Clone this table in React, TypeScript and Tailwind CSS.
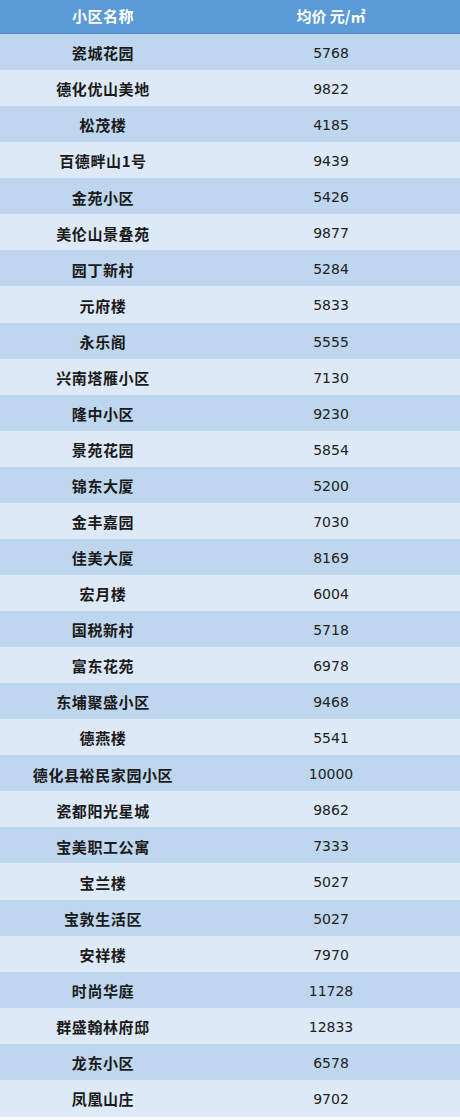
import React from "react";

const rows: [string, string][] = [
  ["瓷城花园", "5768"],
  ["德化优山美地", "9822"],
  ["松茂楼", "4185"],
  ["百德畔山1号", "9439"],
  ["金苑小区", "5426"],
  ["美伦山景叠苑", "9877"],
  ["园丁新村", "5284"],
  ["元府楼", "5833"],
  ["永乐阁", "5555"],
  ["兴南塔雁小区", "7130"],
  ["隆中小区", "9230"],
  ["景苑花园", "5854"],
  ["锦东大厦", "5200"],
  ["金丰嘉园", "7030"],
  ["佳美大厦", "8169"],
  ["宏月楼", "6004"],
  ["国税新村", "5718"],
  ["富东花苑", "6978"],
  ["东埔聚盛小区", "9468"],
  ["德燕楼", "5541"],
  ["德化县裕民家园小区", "10000"],
  ["瓷都阳光星城", "9862"],
  ["宝美职工公寓", "7333"],
  ["宝兰楼", "5027"],
  ["宝敦生活区", "5027"],
  ["安祥楼", "7970"],
  ["时尚华庭", "11728"],
  ["群盛翰林府邸", "12833"],
  ["龙东小区", "6578"],
  ["凤凰山庄", "9702"],
];

const cjk = { fontFamily: '"Noto Sans CJK SC", "Noto Sans", sans-serif' };
const num = { fontFamily: '"DejaVu Sans", sans-serif' };

export default function App() {
  return (
    <div className="w-[460px] h-[1120px] bg-[#f5f9fc] overflow-hidden">
      <div className="flex h-[34px] bg-[#5b9bd5] border-b border-[#4e8ccb] text-white font-bold text-[15px]">
        <div className="w-[206px] flex items-center justify-center tracking-[0.5px]" style={cjk}>
          小区名称
        </div>
        <div className="flex-1 flex items-center justify-center pr-[4px]" style={cjk}>
          均价 元/㎡
        </div>
      </div>
      {rows.map(([name, price], i) => (
        <div
          key={i}
          className={
            "flex h-[36.07px] " + (i % 2 === 0 ? "bg-[#bed6ee]" : "bg-[#dde9f6]")
          }
        >
          <div
            className="w-[206px] flex items-center justify-center pt-[3px] font-bold text-[15px] tracking-[0.6px] text-[#1a1a1a]"
            style={cjk}
          >
            {name}
          </div>
          <div
            className="flex-1 flex items-center justify-center pt-[3px] pr-[4px] text-[14px] text-[#222]"
            style={num}
          >
            {price}
          </div>
        </div>
      ))}
      <div className="h-px bg-[#e3ebf3]" />
    </div>
  );
}
